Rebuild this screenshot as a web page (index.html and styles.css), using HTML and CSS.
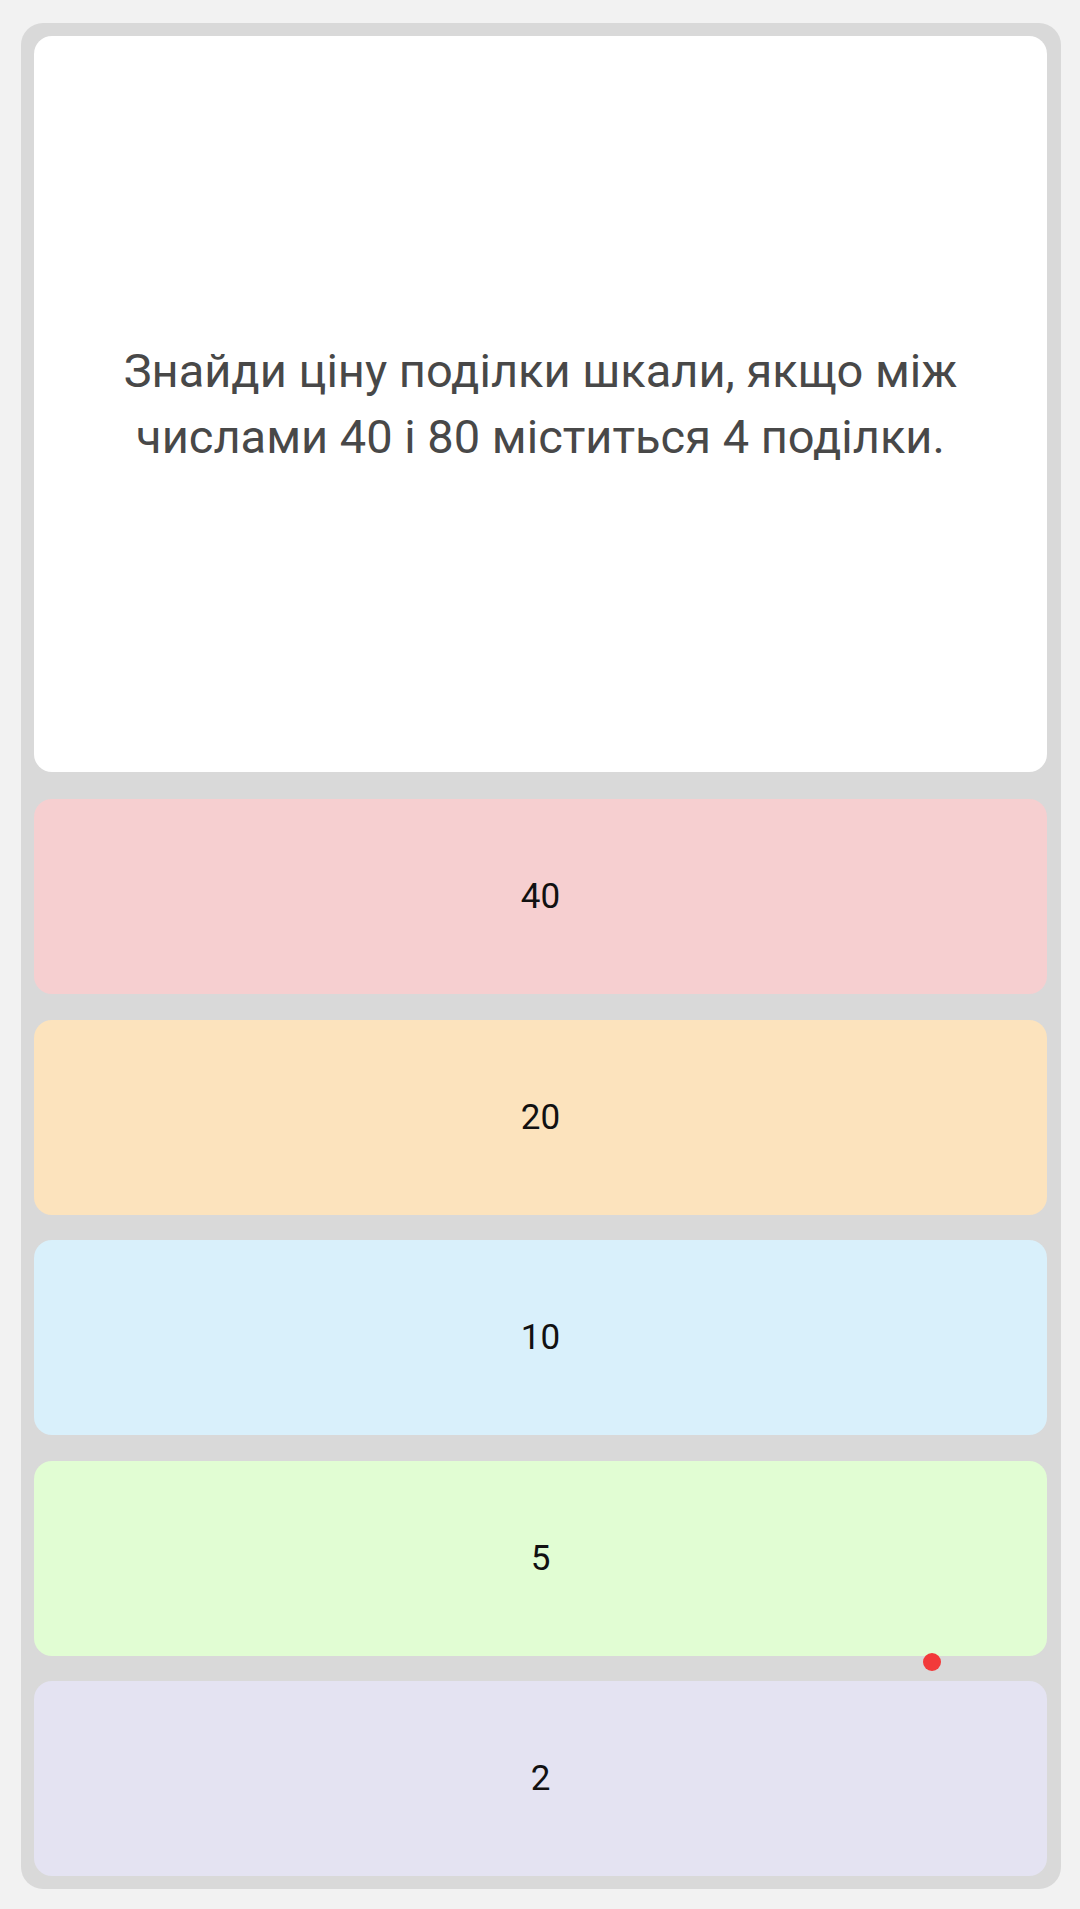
FILE: index.html
```html
<!DOCTYPE html>
<html lang="uk">

<head>
  <meta charset="UTF-8">
  <meta name="viewport" content="width=device-width, initial-scale=1.0">
  <title>Питання</title>
  <link rel="stylesheet" href="styles.css">
</head>

<body>
  <div class="quiz">
    <div class="question">
      <p>Знайди ціну поділки шкали, якщо між числами 40 і 80 міститься 4 поділки.</p>
    </div>

    <div class="answers">
      <button class="answer answer-red">40</button>
      <button class="answer answer-orange">20</button>
      <button class="answer answer-blue">10</button>
      <button class="answer answer-green">5</button>
      <button class="answer answer-purple">2</button>
    </div>

    <span class="touch-dot"></span>
  </div>
</body>

</html>
```

FILE: styles.css
```css
/* Quiz page */

body {
  margin: 0;
  padding: 23px 19px 20px 21px;
  background-color: #f2f2f2;
  font-family: Roboto, "Noto Sans", sans-serif;
}

.quiz {
  position: relative;
  display: flex;
  flex-direction: column;
  gap: 27px;
  padding: 13px 14px 13px 13px;
  background-color: #d9d9d9;
  border-radius: 22px;
}

.question {
  display: flex;
  align-items: center;
  justify-content: center;
  height: 736px;
  padding: 0 60px;
  background-color: #fff;
  border-radius: 18px;
  box-sizing: border-box;
}

.question p {
  margin: 0;
  color: #484848;
  font-size: 47px;
  line-height: 66px;
  text-align: center;
}

.answers {
  display: flex;
  flex-direction: column;
  gap: 25.5px;
}

.answer {
  height: 195px;
  border: none;
  border-radius: 18px;
  color: #111;
  font-family: Roboto, "Noto Sans", sans-serif;
  font-size: 35px;
  cursor: pointer;
}

.answer-red { background-color: #f6cfd0; }
.answer-orange { background-color: #fce3bd; }
.answer-blue { background-color: #d9f0fb; }
.answer-green { background-color: #e1fdd3; }
.answer-purple { background-color: #e4e3f2; }

.touch-dot {
  position: absolute;
  left: 902px;
  top: 1630px;
  width: 18px;
  height: 18px;
  border-radius: 50%;
  background-color: #f23a3a;
}
```
